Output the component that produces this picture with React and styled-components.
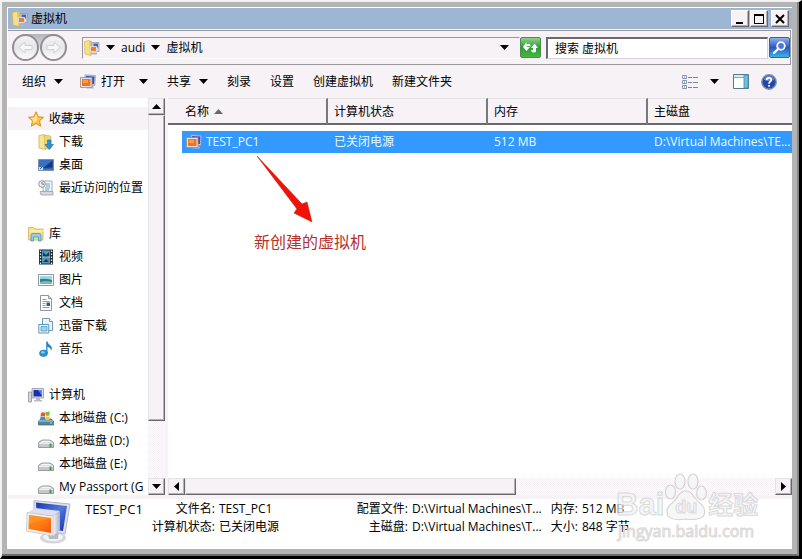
import React from "react";
import styled, { createGlobalStyle } from "styled-components";

const Global = createGlobalStyle`
  * { box-sizing: border-box; }
  body { margin: 0; background: #000; }
  body, button, input, table {
    font-family: "Open Sans", "Noto Sans CJK SC", sans-serif;
    font-size: 12px;
    line-height: 18px;
    color: #000;
  }
  button { border: 0; padding: 0; background: none; white-space: nowrap; }
  button > svg { display: block; }
`;

/* ---------- window frame ---------- */
const Shell = styled.div`
  height: 100vh;
  display: flex;
  border-top: 2px solid #f2f2f2;
  border-left: 2px solid #f2f2f2;
  border-right: 3px solid #000;
  border-bottom: 3px solid #000;
`;
const Frame = styled.main`
  flex: 1;
  min-width: 0;
  display: flex;
  flex-direction: column;
  padding: 5px;
  background: #b4b4b4;
  border-right: 2px solid #858585;
  border-bottom: 2px solid #6c6c6c;
`;
const Surface = styled.div`
  flex: 1;
  min-height: 0;
  display: flex;
  flex-direction: column;
  position: relative;
  background: #f6f2f6;
  border-top: 1px solid #fff;
  border-left: 1px solid #fff;
`;
const TitleBar = styled.header`
  display: flex;
  align-items: center;
  height: 21px;
  padding: 0 3px 0 4px;
  background: #9cb6d4;
`;
const Title = styled.h1`
  flex: 1;
  margin: 0 0 0 3px;
  font-size: 12px;
  font-weight: 400;
`;
const CaptionButton = styled.button`
  width: 18px;
  height: 17px;
  margin-left: ${(p) => (p.$apart ? 3 : 1)}px;
  background: #f6f2f6;
  border: 1px solid;
  border-color: #fff #6b686b #6b686b #fff;
  box-shadow: inset -1px -1px #b5b2b5;
  svg { margin: 0 auto; }
`;

/* ---------- address bar ---------- */
const AddressBar = styled.nav`
  display: flex;
  align-items: center;
  height: 35px;
  margin: 1px 1px 0 0;
  padding: 0 0 0 4px;
  border: 1px solid #9a979a;
  border-left: 0;
`;
const Travel = styled.div`
  display: flex;
  gap: 1px;
  border-radius: 14px;
  background: linear-gradient(#b4b4b8 0, #d8d8dc 45%, #f6f2f6 60%);
`;
const RoundButton = styled.button`
  width: 27px;
  height: 27px;
  border-radius: 50%;
  border: 2px solid #909094;
  background: linear-gradient(#f4f4f6, #e6e6ea 50%, #fafafb);
  svg { margin: 0 auto; }
`;
const PathBox = styled.div`
  flex: 1;
  display: flex;
  align-items: center;
  height: 22px;
  margin-left: 15px;
  padding: 0 10px 0 1px;
  border: 1px solid;
  border-color: #9a979a #f6f2f6 #fff #9a979a;
`;
const Crumb = styled.button`
  display: flex;
  align-items: center;
  gap: 6px;
  margin-right: 6px;
`;
const Spacer = styled.span`flex: 1;`;
const SquareButton = styled.button`
  width: 21px;
  height: 21px;
  border-radius: 2px;
  border: 1px solid ${(p) => p.$edge};
  background: ${(p) => p.$fill};
  svg { margin: 0 auto; }
`;
const Search = styled.input`
  width: 222px;
  height: 22px;
  margin: 0 1px 0 5px;
  padding: 0 0 0 7px;
  background: #fff;
  border: 2px solid;
  border-color: #6b686b #d6d3d6 #d6d3d6 #6b686b;
  border-right-width: 1px;
  border-bottom-width: 1px;
  border-radius: 0;
  outline: 0;
`;

/* ---------- command bar ---------- */
const CommandBar = styled.div`
  display: flex;
  align-items: center;
  gap: 15px;
  height: 33px;
  padding: 0 15px 0 12px;
`;
const Command = styled.button`
  display: flex;
  align-items: center;
  gap: ${(p) => (p.$wide ? 12 : 8)}px;
  padding: 0 2px;
  padding-left: ${(p) => (p.$icon ? 0 : 2)}px;
`;
const CommandLabel = styled.span`
  display: flex;
  align-items: center;
  gap: 5px;
  padding-right: 6px;
`;
const ViewTools = styled.div`
  display: flex;
  align-items: center;
  gap: 12px;
  margin-left: auto;
`;

/* ---------- body ---------- */
const Body = styled.div`
  flex: 1;
  min-height: 0;
  display: flex;
`;
const Sidebar = styled.aside`
  width: 140px;
  padding-top: 9px;
  overflow: hidden;
  background: #fff;
`;
const Group = styled.ul`
  list-style: none;
  margin: 0 0 23px;
  padding: 0;
`;
const Node = styled.li`
  height: 23px;
  padding-left: ${(p) => (p.$root ? 20 : 30)}px;
  background: ${(p) => (p.$active ? "#f6f2f6" : "transparent")};
`;
const NodeLink = styled.a`
  display: flex;
  align-items: center;
  gap: 5px;
  height: 23px;
  color: #000;
  text-decoration: none;
  white-space: nowrap;
  svg { flex: none; }
`;
const dither = `repeating-conic-gradient(#fff 0 25%, #f3eff3 0 50%) 0 0 / 2px 2px`;
const VScroll = styled.div`
  display: flex;
  flex-direction: column;
  width: 17px;
  margin-right: 3px;
  background: ${dither};
`;
const HScroll = styled.div`
  display: flex;
  height: 17px;
  background: ${dither};
`;
const ScrollButton = styled.button`
  flex: none;
  width: 17px;
  height: 17px;
  background: #f6f2f6;
  border: 1px solid;
  border-color: #e6e3e6 #6b686b #6b686b #e6e3e6;
  box-shadow: inset -1px -1px #b5b2b5;
  svg { margin: 0 auto; }
`;
const Thumb = styled.div`
  flex: 0 0 ${(p) => p.$share}%;
  background: #f6f2f6;
  border: 1px solid;
  border-color: #e6e3e6 #6b686b #6b686b #e6e3e6;
  box-shadow: inset -1px -1px #b5b2b5;
`;
const Content = styled.section`
  flex: 1;
  min-width: 0;
  display: flex;
  flex-direction: column;
  background: #fff;
`;
const ListArea = styled.div`
  position: relative;
  flex: 1;
  min-height: 0;
  overflow: hidden;
`;
const List = styled.table`
  width: 100%;
  table-layout: fixed;
  border-collapse: separate;
  border-spacing: 0;
`;
const HeadCell = styled.th`
  width: ${(p) => (p.$last ? "auto" : "160px")};
  height: 27px;
  padding: 2px 0 0 ${(p) => (p.$first ? 17 : 6)}px;
  text-align: left;
  font-weight: 400;
  background: #f6f2f6;
  border-top: 1px solid #e6e3e6;
  border-bottom: 2px solid #6b686b;
  border-right: ${(p) => (p.$last ? 0 : 2)}px solid #7b787b;
  svg { margin-left: 5px; }
`;
const Cell = styled.td`
  height: 28px;
  padding: 0 0 0 ${(p) => (p.$first ? 18 : 6)}px;
  border-top: 6px solid #fff;
  background: ${(p) => (p.$first ? "linear-gradient(to right, #fff 14px, #3399ff 14px)" : "#3399ff")};
  color: #e4fbff;
  white-space: nowrap;
  overflow: hidden;
`;
const FileName = styled.span`
  display: flex;
  align-items: center;
  gap: 4px;
`;
const Callout = styled.figure`
  position: absolute;
  left: 86px;
  top: 58px;
  margin: 0;
  svg { display: block; margin-left: 3px; }
`;
const CalloutText = styled.figcaption`
  margin-top: 8px;
  font-size: 16px;
  line-height: 24px;
  color: #b5302c;
`;

/* ---------- details ---------- */
const Details = styled.footer`
  display: flex;
  height: 54px;
  padding: 1px 0 0 18px;
  background: #fff;
  border-top: 4px solid #f6f2f6;
`;
const DetailsName = styled.strong`
  width: 66px;
  margin-left: 11px;
  font-size: 13px;
  font-weight: 400;
`;
const Facts = styled.dl`
  display: grid;
  grid-template-columns: ${(p) => p.$cols};
  grid-auto-rows: 18px;
  column-gap: 4px;
  margin: 0;
  dt { text-align: right; white-space: nowrap; }
  dd { margin: 0; white-space: nowrap; }
`;

/* ---------- watermark ---------- */
const Mark = styled.div`
  position: absolute;
  right: 32px;
  bottom: 8px;
  width: 144px;
  opacity: 0.8;
  color: #f3f3f3;
  -webkit-text-stroke: 1px #d2d2d2;
  pointer-events: none;
`;
const MarkRow = styled.div`
  display: flex;
  align-items: flex-end;
  height: 48px;
`;
const MarkWord = styled.b`
  font-family: "Liberation Sans", "Noto Sans CJK SC", sans-serif;
  font-size: ${(p) => p.$size}px;
  line-height: 32px;
  font-weight: 700;
`;
const Paw = styled.span`
  position: relative;
  height: 48px;
  margin: 0 1px;
  svg { display: block; }
`;
const PawWord = styled.b`
  position: absolute;
  left: 0;
  right: 0;
  bottom: 4px;
  text-align: center;
  font-family: "Liberation Sans", sans-serif;
  font-size: 18px;
  line-height: 20px;
`;
const MarkSite = styled.div`
  padding-left: 2px;
  font-family: "Open Sans", sans-serif;
  font-size: 16px;
  line-height: 20px;
`;

/* ---------- icons ---------- */
const Arrow = ({ dir = "down", color = "#000" }) => {
  const d = {
    down: "M0 2h9L4.500 7z",
    up: "M0 7h9L4.500 2z",
    left: "M7 0v9L2 4.500z",
    right: "M2 0v9L7 4.500z",
  }[dir];
  return <svg width="9" height="9" viewBox="0 0 9 9"><path d={d} fill={color} /></svg>;
};
const VmIcon = () => (
  <svg width="16" height="16" viewBox="0 0 16 16">
    <path d="M5 .8 15.500 1.500 14.800 11.500H5z" fill="#c3c9de" stroke="#8d93ad" strokeWidth=".6" />
    <path d="M6 2l8.500.5L14 10H6z" fill="#3a52b8" />
    <path d="M9 12h4l1 2.500H6z" fill="#b9bcc6" />
    <path d="M.5 3.500h11.500v10H.5z" fill="#e2e0e2" stroke="#9b8a84" strokeWidth=".8" />
    <path d="M2 5h8.500v7H2z" fill="#ee7420" />
    <path d="M3 6h5v3H3z" fill="#ff9a48" />
  </svg>
);
const VmFolderIcon = () => (
  <svg width="16" height="16" viewBox="0 0 16 16">
    <path d="M.5 1.500 5 .5l2 1v14l-6-1.500z" fill="#f7e08a" stroke="#d9b44e" strokeWidth=".7" />
    <path d="M5 1h3v13.500H6z" fill="#e9c659" />
    <path d="M8 2.500h7v9H8z" fill="#d7dbea" stroke="#8890a8" strokeWidth=".7" />
    <path d="M9.500 3.500h4.500v4H9.500z" fill="#4363b8" />
    <path d="M6.500 6.500h6v5h-6z" fill="#ef7d2a" stroke="#dcdce0" strokeWidth="1" />
    <path d="M8 12.500h5v2H7z" fill="#aeb4c4" />
  </svg>
);
const VmLarge = () => (
  <svg width="48" height="48" viewBox="0 0 48 48">
    <defs>
      <linearGradient id="vmBlue" x1="0" y1="0" x2="1" y2="1"><stop offset="0" stopColor="#1c34ae" /><stop offset=".5" stopColor="#5078dc" /><stop offset="1" stopColor="#1731a8" /></linearGradient>
      <linearGradient id="vmOrange" x1="0" y1="0" x2="1" y2="1"><stop offset="0" stopColor="#ff8a10" /><stop offset=".55" stopColor="#ff7a12" /><stop offset="1" stopColor="#f2560c" /></linearGradient>
      <linearGradient id="vmSide" x1="0" y1="0" x2="1" y2="0"><stop offset="0" stopColor="#f6f6f8" /><stop offset="1" stopColor="#a9aecb" /></linearGradient>
    </defs>
    <ellipse cx="27" cy="38" rx="13" ry="5.500" fill="#d5d7da" />
    <ellipse cx="27" cy="37" rx="10" ry="4" fill="#f4f5f6" />
    <path d="M21 30h12l-1 9h-9z" fill="#b7bac0" />
    <path d="M8 .5 44 4 39 34 8 29z" fill="#dfe2ea" stroke="#b4b8c6" />
    <path d="M10 2.500 41 6 37 31 11 27z" fill="url(#vmBlue)" />
    <path d="M1 13 9 8l25 3-7 5z" fill="#dde0ee" />
    <path d="M27 16 34 11v19l-7 6z" fill="url(#vmSide)" />
    <path d="M1 12.500 27 16v20L.5 31z" fill="#f0f0f2" stroke="#c4c4c8" strokeWidth=".8" />
    <path d="M3 15 25 18v15L2.500 29z" fill="url(#vmOrange)" />
    <path d="M3 15 25 18 3 24z" fill="#ffa33c" opacity=".5" />
  </svg>
);
const S = ({ children }) => <svg width="16" height="16" viewBox="0 0 16 16">{children}</svg>;
const Star = () => (
  <S><path d="M8 .8 10.200 5.800l5.300.5-4 3.600 1.200 5.300L8 12.400l-4.700 2.800 1.200-5.300-4-3.600 5.300-.5z" fill="#fbc544" stroke="#e08a1c" /><path d="M8 3 9.500 7 8 10.500 4.500 12l.9-3L3 7l3.500-.3z" fill="#ffe79a" /></S>
);
const Downloads = () => (
  <S><path d="M1 1.500 6 .5l2 1v14l-7-1.500z" fill="#f7e591" stroke="#d3b552" strokeWidth=".8" /><path d="M6 1.500h5l2 1v12H7z" fill="#eed678" stroke="#cfae50" strokeWidth=".6" /><path d="M9.500 6h3.500v4.500h2.500L11.200 15.500 7 10.500h2.500z" fill="#2d93cf" stroke="#176ea6" strokeWidth=".6" /></S>
);
const Desktop = () => (
  <S><path d="M.5 2.500h15v11H.5z" fill="#24529f" stroke="#7d8fa8" /><path d="M1 3h14L6 10l-5 1z" fill="#3a70c4" /><path d="M6 11 14 4v6z" fill="#163a82" /><path d="M1 11.500h14V13H1z" fill="#3f7db8" /><path d="M1 10h4v3H1z" fill="#bfe2ee" /><path d="M2 12l2-2" stroke="#1e5f94" /></S>
);
const Recent = () => (
  <S><path d="M5 1h9v11H5z" fill="#f4f7fa" stroke="#8a98a6" strokeWidth=".8" /><path d="M7 4h5M8 6h4M7 8h5M7 10h4" stroke="#6aa5c9" /><path d="M2 11.500h13v3.500H3z" fill="#d5d9dd" stroke="#9aa0a6" strokeWidth=".8" /><circle cx="4" cy="4" r="3.300" fill="#eef1f4" stroke="#8f979f" /><path d="M4 2v2.200h2" fill="none" stroke="#4d5a66" strokeWidth=".8" /></S>
);
const Library = () => (
  <S><path d="M.5 2.500V1.500h5l1.500 1.500h8v11H.5z" fill="#f5e28c" stroke="#cfae52" strokeWidth=".8" /><path d="M1 5h14" stroke="#fff6c6" /><path d="M3 15V9.500q0-2 2-2h6q2 0 2 2V15h-2.500v-4h-5v4z" fill="#8fd0ea" stroke="#3c93bd" strokeWidth=".8" /></S>
);
const Video = () => (
  <S><path d="M1 .5h14v15H1z" fill="#24292d" /><path d="M4 1.500h8v13H4z" fill="#4b9ccc" /><path d="M5 3l3 3 3-3v4l-3 1-3-1zM5 13l3-3 3 3z" fill="#17384f" /><path d="M8 9l3 1-1 2z" fill="#b9572e" /><path d="M2.500 1.500v14M13.500 1.500v14" stroke="#e8edf0" strokeWidth="1.300" strokeDasharray="1.500 1.500" /><path d="M4 8h8" stroke="#b6d3e2" strokeWidth=".6" /></S>
);
const Picture = () => (
  <S><path d="M.5 2.500h15v11H.5z" fill="#fff" stroke="#8e9aa2" /><path d="M2 4h12v8H2z" fill="#9fd6e8" /><path d="M2 7q6-1 12 1v4H2z" fill="#2f7f8c" /><path d="M2 10q6-2 12 0v2H2z" fill="#78bcae" /></S>
);
const Document = () => (
  <S><path d="M2.500.5h8l3 3v12h-11z" fill="#fff" stroke="#8f979e" /><path d="M10.500.5v3h3" fill="#dfe5ea" stroke="#8f979e" /><path d="M4.500 4.500h4M4.500 6.500h7M4.500 8.500h3M4.500 10.500h3M4.500 12.500h7" stroke="#7fa2bf" /><path d="M8.500 7.500h3.500v3.500H8.500z" fill="#2c5f8f" /></S>
);
const Thunder = () => (
  <S><path d="M4.500.5h7l3 3v9h-10z" fill="#eaf5fb" stroke="#6f9db8" /><path d="M11.500.5v3h3" fill="#fff" stroke="#6f9db8" /><path d="M.8 6.500h10v8.500h-10z" fill="#f4fafd" stroke="#5c95b6" /><path d="M3 8.500h6v4.500H3z" fill="#9ed2ee" stroke="#4c97c4" strokeWidth=".8" /></S>
);
const Music = () => (
  <S><ellipse cx="5.500" cy="12.300" rx="4" ry="3.200" fill="#2c97d6" stroke="#166fa8" strokeWidth=".6" /><path d="M8.200.5h1.300q.5 2.500 3 4 2.500 2 .5 5.500.3-3-3.500-4.300V12H8.200z" fill="#2287c6" /><ellipse cx="4.800" cy="11.300" rx="1.800" ry="1" fill="#9bdcf7" /></S>
);
const Computer = () => (
  <S><path d="M.5 5h3v10h-3z" fill="#d6d9dd" stroke="#8b9097" strokeWidth=".8" /><path d="M4 1.500h11.500v9.500H4z" fill="#dde0e6" stroke="#90959e" strokeWidth=".8" /><path d="M5.500 3h8.500v6.500H5.500z" fill="#1a2fae" /><path d="M10 3h4v6z" fill="#5c83e0" /><path d="M8 11h4v2h2v1.500H6V13h2z" fill="#b7bbc2" /></S>
);
const SystemDisk = () => (
  <S><path d="M.5 11 3 9h10l2.500 2v4H.5z" fill="#52849a" stroke="#3b6478" strokeWidth=".7" /><path d="M1 11h14" stroke="#b6d4df" /><path d="M12 13h2" stroke="#6ee04e" strokeWidth="1.500" /><path d="M3 3q2-1.500 4 0v3.500q-2-1.200-4.500 0z" fill="#e8582a" /><path d="M7.500 1.500q2 1 4-.3v4q-2 1-4 0z" fill="#7cb83a" /><path d="M2.500 7q2-1 4.500 0v3H2z" fill="#3e8fd0" /><path d="M7.500 6q2 1 4 0V10h-4z" fill="#f6c62d" /></S>
);
const Disk = () => (
  <S><path d="M.5 9.500Q3 7 5 7h6q2 0 4.500 2.500v5H.5z" fill="#c6c9cb" stroke="#85898c" strokeWidth=".8" /><path d="M1.500 9.500Q4 7.800 5 7.800h6q1 0 3.500 1.700z" fill="#f5f6f7" /><path d="M1 10.500h14" stroke="#eef0f1" /><path d="M12.500 10.500v3.500" stroke="#3f9a4e" strokeWidth="2" /></S>
);

const groups = [
  [[Star, "收藏夹"], [Downloads, "下载"], [Desktop, "桌面"], [Recent, "最近访问的位置"]],
  [[Library, "库"], [Video, "视频"], [Picture, "图片"], [Document, "文档"], [Thunder, "迅雷下载"], [Music, "音乐"]],
  [[Computer, "计算机"], [SystemDisk, "本地磁盘 (C:)"], [Disk, "本地磁盘 (D:)"], [Disk, "本地磁盘 (E:)"], [Disk, "My Passport (G"]],
];

export default function App() {
  return (
    <Shell>
      <Global />
      <Frame>
        <Surface>
          <TitleBar>
            <VmFolderIcon />
            <Title>虚拟机</Title>
            <CaptionButton aria-label="最小化"><svg width="12" height="12"><path d="M2 9h7v2H2z" /></svg></CaptionButton>
            <CaptionButton aria-label="最大化"><svg width="12" height="12"><path d="M1 1h10v10H1zM2 3v7h8V3z" fillRule="evenodd" /></svg></CaptionButton>
            <CaptionButton aria-label="关闭" $apart><svg width="12" height="12"><path d="M2 2l8 8M10 2l-8 8" stroke="#000" strokeWidth="2" /></svg></CaptionButton>
          </TitleBar>
          <AddressBar>
            <Travel>
              <RoundButton aria-label="后退"><svg width="17" height="17"><path d="M2 8.500 8 3v3.500h7v4H8V14z" fill="#f8f8fa" stroke="#cfcfd3" /></svg></RoundButton>
              <RoundButton aria-label="前进"><svg width="17" height="17"><path d="M15 8.500 9 3v3.500H2v4h7V14z" fill="#f8f8fa" stroke="#cfcfd3" /></svg></RoundButton>
            </Travel>
            <PathBox>
              <Crumb><VmFolderIcon /><Arrow /></Crumb>
              <Crumb>audi <Arrow /></Crumb>
              <Crumb>虚拟机</Crumb>
              <Spacer />
              <button aria-label="以前的位置"><Arrow /></button>
            </PathBox>
            <SquareButton aria-label="刷新" $edge="#4f8a52" $fill="linear-gradient(#8fd08a, #2f9c36 50%, #46b83c)">
              <svg width="17" height="17"><path d="M1 8 4.500 3v2.500Q9 3 8.500 8 7.500 6.500 4.500 7.500V8H8zM1 8h7L4.500 12zM16 9H9l3.500-4.500z" fill="#fff" /><path d="M11 9h3v4q-5 1.500-5-2.500 1 1 2 .5z" fill="#fff" /></svg>
            </SquareButton>
            <Search aria-label="搜索 虚拟机" defaultValue="搜索 虚拟机" />
            <SquareButton aria-label="搜索" $edge="#39639e" $fill="linear-gradient(#8fb0ea, #2b55c4 50%, #38b4e8)">
              <svg width="17" height="17"><circle cx="10" cy="7" r="3.800" fill="#4c78d6" stroke="#fff" strokeWidth="1.800" /><path d="M7 10l-4 4" stroke="#fff" strokeWidth="2.400" strokeLinecap="round" /></svg>
            </SquareButton>
          </AddressBar>
          <CommandBar>
            <Command>组织<Arrow /></Command>
            <Command $icon><CommandLabel><VmIcon />打开</CommandLabel><Arrow /></Command>
            <Command>共享<Arrow /></Command>
            <Command>刻录</Command>
            <Command>设置</Command>
            <Command>创建虚拟机</Command>
            <Command>新建文件夹</Command>
            <ViewTools>
              <Command aria-label="更改视图" $wide>
                <S><path d="M.5 1.500h4v3h-4zM.5 6.500h4v3h-4zM.5 11.500h4v3h-4z" fill="#fff" stroke="#8a93b4" /><path d="M2 3h1M2 8h1M2 13h1" stroke="#3f6fa8" /><path d="M6 3.500h4M11 3.500h5M6 8.500h4M11 8.500h5M6 13.500h4M11 13.500h5" stroke="#7b83a0" /></S>
                <Arrow />
              </Command>
              <button aria-label="预览窗格">
                <svg width="16" height="15" viewBox="0 0 16 15"><path d="M.5.5h15v14H.5z" fill="#fff" stroke="#56768e" /><path d="M1 1h14v2H1z" fill="#dbe9f3" /><path d="M1 3.500h10" stroke="#8fa7b8" /><path d="M11 1h4v13h-4z" fill="#6fc0dc" stroke="#4b8ea8" strokeWidth=".8" /></svg>
              </button>
              <button aria-label="帮助">
                <svg width="16" height="16" viewBox="0 0 16 16"><circle cx="8" cy="8" r="7.200" fill="#2449a0" stroke="#7e8fb8" strokeWidth="1.400" /><path d="M3 6q1-4 5-4t5 4q-5 2-10 0z" fill="#6c8fd8" /><path d="M5.700 6q0-2.200 2.300-2.200T10.300 6q0 1-1.200 1.800T8 9.800M8 11v1.800" fill="none" stroke="#fff" strokeWidth="1.700" /></svg>
              </button>
            </ViewTools>
          </CommandBar>

          <Body>
            <Sidebar>
              {groups.map((g, i) => (
                <Group key={i}>
                  {g.map(([Icon, label], j) => (
                    <Node key={label} $root={j === 0} $active={i === 0 && j === 0}>
                      <NodeLink href="#"><Icon />{label}</NodeLink>
                    </Node>
                  ))}
                </Group>
              ))}
            </Sidebar>
            <VScroll>
              <ScrollButton aria-label="向上滚动"><Arrow dir="up" /></ScrollButton>
              <Thumb $share={77} />
              <Spacer />
              <ScrollButton aria-label="向下滚动"><Arrow /></ScrollButton>
            </VScroll>
            <Content>
              <ListArea>
                <List>
                  <thead>
                    <tr>
                      <HeadCell $first>名称<Arrow dir="up" color="#6b686b" /></HeadCell>
                      <HeadCell>计算机状态</HeadCell>
                      <HeadCell>内存</HeadCell>
                      <HeadCell $last>主磁盘</HeadCell>
                    </tr>
                  </thead>
                  <tbody>
                    <tr>
                      <Cell $first><FileName><VmIcon />TEST_PC1</FileName></Cell>
                      <Cell>已关闭电源</Cell>
                      <Cell>512 MB</Cell>
                      <Cell>D:\Virtual Machines\TE...</Cell>
                    </tr>
                  </tbody>
                </List>
                <Callout>
                  <svg width="56" height="66" viewBox="0 0 56 66"><path d="M0 0 45 48 50 46 55 66 37 57 40 53z" fill="#ee1208" stroke="#c2231c" strokeWidth=".6" /></svg>
                  <CalloutText>新创建的虚拟机</CalloutText>
                </Callout>
              </ListArea>
              <HScroll>
                <ScrollButton aria-label="向左滚动"><Arrow dir="left" /></ScrollButton>
                <Thumb $share={53} />
                <Spacer />
                <ScrollButton aria-label="向右滚动"><Arrow dir="right" /></ScrollButton>
              </HScroll>
            </Content>
          </Body>

          <Details>
            <VmLarge />
            <DetailsName>TEST_PC1</DetailsName>
            <Facts $cols="64px 132px"><dt>文件名:</dt><dd>TEST_PC1</dd><dt>计算机状态:</dt><dd>已关闭电源</dd></Facts>
            <Facts $cols="57px 136px"><dt>配置文件:</dt><dd>D:\Virtual Machines\T...</dd><dt>主磁盘:</dt><dd>D:\Virtual Machines\T...</dd></Facts>
            <Facts $cols="30px auto"><dt>内存:</dt><dd>512 MB</dd><dt>大小:</dt><dd>848 字节</dd></Facts>
          </Details>

          <Mark>
            <MarkRow>
              <MarkWord $size={31}>Bai</MarkWord>
              <Paw>
                <svg width="42" height="48" viewBox="0 0 42 48" fill="#f6f6f6" stroke="#cccccc" strokeWidth="1.200">
                  <ellipse cx="5.500" cy="19" rx="5" ry="7" /><ellipse cx="15" cy="8.500" rx="5" ry="7.500" /><ellipse cx="28" cy="8.500" rx="5" ry="7.500" /><ellipse cx="36.500" cy="20" rx="4.800" ry="7" />
                  <path d="M21 18q5 0 8 6 3 4 8 8 4 5 2 10-3 6-18 4-14 2-18-3-3-7 3-12 4-3 7-8 3-5 8-5z" />
                </svg>
                <PawWord>du</PawWord>
              </Paw>
              <MarkWord $size={25}>经验</MarkWord>
            </MarkRow>
            <MarkSite>jingyan.baidu.com</MarkSite>
          </Mark>
        </Surface>
      </Frame>
    </Shell>
  );
}
